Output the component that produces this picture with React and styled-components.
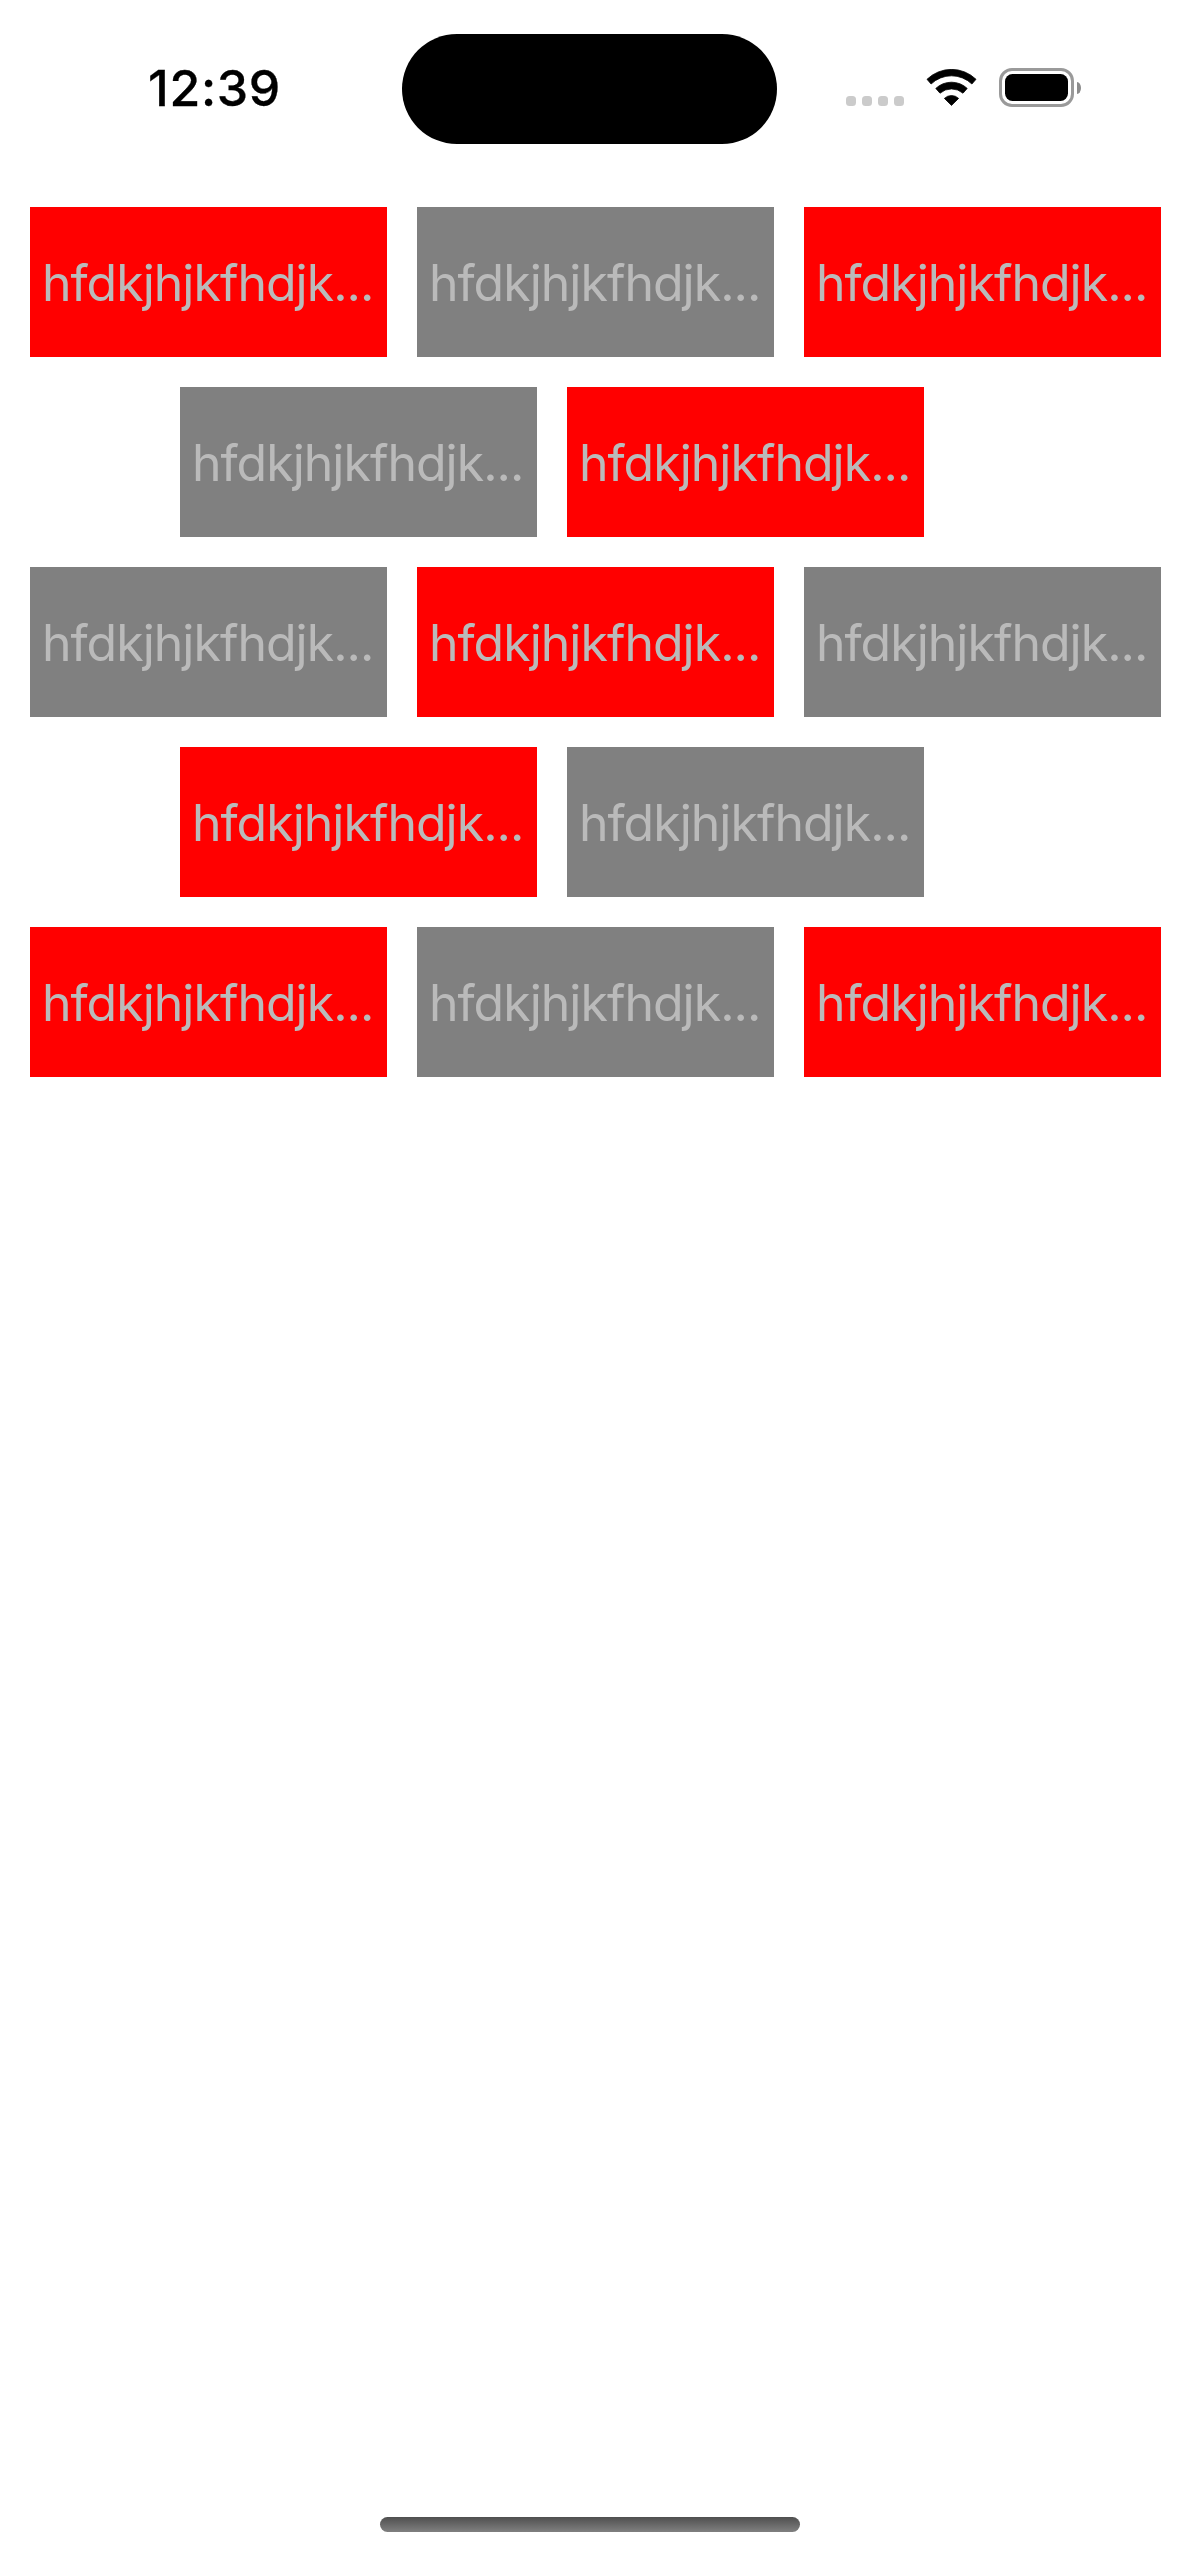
import React from "react";
import styled, { createGlobalStyle } from "styled-components";

const GlobalStyle = createGlobalStyle`
  *, *::before, *::after { box-sizing: border-box; }
  html, body { margin: 0; padding: 0; background: #ffffff; }
`;

const Screen = styled.div`
  display: flex;
  flex-direction: column;
  width: 1179px;
  height: 2556px;
  overflow: hidden;
  background: #ffffff;
  font-family: Inter, "Liberation Sans", sans-serif;
`;

const StatusBar = styled.header`
  display: grid;
  grid-template-columns: 401.75px 375.5px 1fr;
  align-items: start;
  flex: none;
  height: 207px;
`;

const Clock = styled.time`
  padding: 58px 0 0 148px;
  color: #000000;
  font-size: 50px;
  font-weight: 500;
  line-height: 60px;
  letter-spacing: 0.7px;
  -webkit-text-stroke: 0.3px #000000;
`;

const Island = styled.div`
  height: 110.7px;
  margin-top: 33.6px;
  border-radius: 56px;
  background: #000000;
`;

const Indicators = styled.div`
  display: flex;
  align-items: flex-end;
  height: 107px;
  padding-left: 68.75px;
`;

const SignalDots = styled.div`
  display: flex;
  gap: 6px;
  margin: 0 22px 1px 0;
`;

const Dot = styled.span`
  width: 10px;
  height: 10px;
  border-radius: 3.5px;
  background: #cbcbcb;
`;

const WifiIcon = styled.svg`
  display: block;
  width: 51px;
  height: 38px;
  margin-right: 22px;
`;

const Battery = styled.div`
  display: flex;
  align-items: center;
  gap: 3px;
`;

const BatteryShell = styled.div`
  width: 75px;
  height: 39px;
  padding: 3px;
  border: 3px solid #9a9a9a;
  border-radius: 13px;
`;

const BatteryLevel = styled.div`
  height: 100%;
  border-radius: 7.5px;
  background: #000000;
`;

const BatteryNub = styled.div`
  width: 4px;
  height: 12px;
  border-radius: 0 4px 4px 0 / 0 6px 6px 0;
  background: #8c8c8c;
`;

const Wall = styled.main`
  display: flex;
  flex: 1;
  flex-direction: column;
  gap: 30px;
`;

const Course = styled.div`
  display: flex;
  gap: 30px;
  padding-left: ${({ $shifted }) => ($shifted ? 180 : 30)}px;
`;

const Brick = styled.div`
  display: flex;
  align-items: center;
  flex: none;
  width: 357px;
  height: 150px;
  padding: 2px 0 0 12px;
  overflow: hidden;
  background: ${({ $tone }) => ($tone === "red" ? "#ff0000" : "#808080")};
  color: #bababa;
  font-size: 50px;
  line-height: 60px;
  letter-spacing: -1px;
  white-space: nowrap;
`;

const HomeIndicator = styled.div`
  align-self: center;
  flex: none;
  width: 420px;
  height: 15px;
  margin-bottom: 24px;
  border-radius: 7.5px;
  background: linear-gradient(#4f4f4f, #808080);
`;

const label = "hfdkjhjkfhdjk...";

const courses = [
  ["red", "gray", "red"],
  ["gray", "red"],
  ["gray", "red", "gray"],
  ["red", "gray"],
  ["red", "gray", "red"],
];

function Wifi() {
  return (
    <WifiIcon viewBox="0 0 51 38" fill="#000" stroke="#000" strokeWidth="0.8" strokeLinejoin="round">
      <path d="M1 10.3A35.2 35.2 0 0 1 50 10.3L45.9 15A29.5 29.5 0 0 0 5.1 15Z" />
      <path d="M9.8 19.4A23 23 0 0 1 41.2 19.4L37 24.2A17.6 17.6 0 0 0 14 24.2Z" />
      <path d="M18.4 29.4A10.2 10.2 0 0 1 32.6 29.4L25.5 36.4Z" />
    </WifiIcon>
  );
}

export default function App() {
  return (
    <Screen>
      <GlobalStyle />
      <StatusBar>
        <Clock>12:39</Clock>
        <Island />
        <Indicators>
          <SignalDots>
            <Dot />
            <Dot />
            <Dot />
            <Dot />
          </SignalDots>
          <Wifi />
          <Battery>
            <BatteryShell>
              <BatteryLevel />
            </BatteryShell>
            <BatteryNub />
          </Battery>
        </Indicators>
      </StatusBar>
      <Wall>
        {courses.map((tones, row) => (
          <Course key={row} $shifted={row % 2 === 1}>
            {tones.map((tone, column) => (
              <Brick key={column} $tone={tone}>
                {label}
              </Brick>
            ))}
          </Course>
        ))}
      </Wall>
      <HomeIndicator />
    </Screen>
  );
}
